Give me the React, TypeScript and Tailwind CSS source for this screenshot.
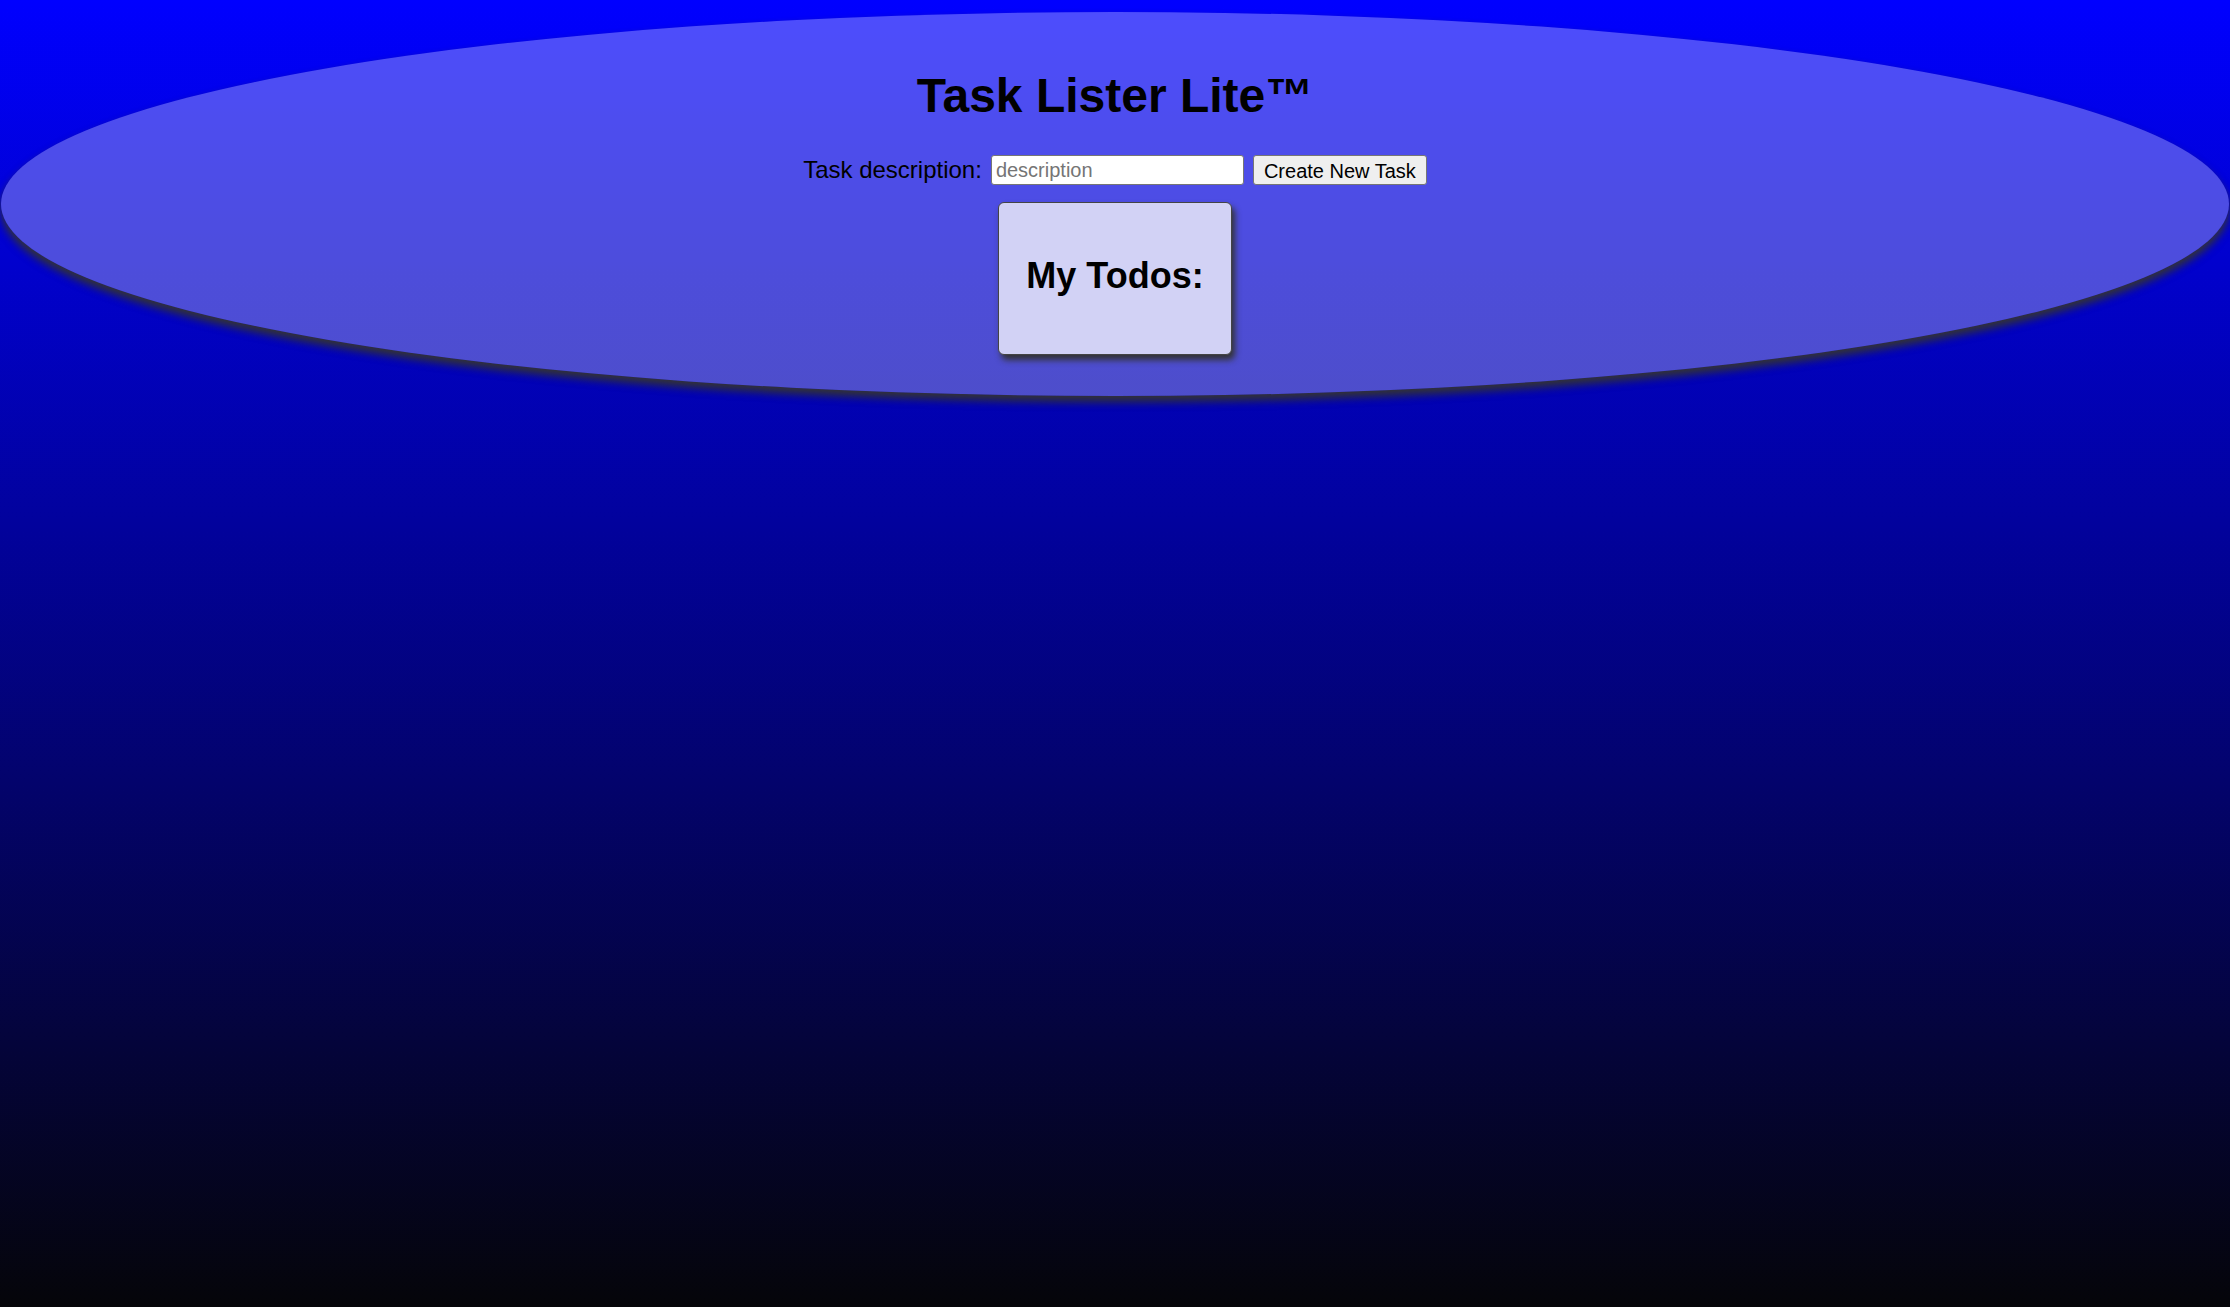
export default function App() {
  return (
    <div className="min-h-screen bg-[linear-gradient(#0000ff,#050509)] px-px pt-[12px] font-['Liberation_Sans',Arial,sans-serif] text-black">
      <header className="flex h-[384px] flex-col items-center rounded-[50%] bg-[rgba(255,255,255,0.3)] pt-[24px] shadow-[0_6px_9px_#333]">
        <h1 className="my-[32px] text-[48px] leading-[1.15] font-bold">Task Lister Lite™</h1>
        <form className="flex items-center gap-[9px]" onSubmit={(e) => e.preventDefault()}>
          <label htmlFor="new-task" className="text-[24px] leading-[1.15]">
            Task description:
          </label>
          <input
            id="new-task"
            type="text"
            placeholder="description"
            className="h-[30px] w-[253px] rounded-[3px] border border-[#767676] bg-white px-[4px] text-[20px] placeholder:text-[#757575]"
          />
          <button
            type="submit"
            className="h-[30px] w-[174px] rounded-[3px] border border-[#767676] bg-[#efefef] text-[20px]"
          >
            Create New Task
          </button>
        </form>
        <div className="mt-[17px] w-[234px] rounded-[6px] border border-[#444] bg-[#d2d2f5] pt-[52px] pb-[57px] text-center shadow-[3px_5px_6px_#333]">
          <h2 className="text-[36px] leading-[1.15] font-bold">My Todos:</h2>
        </div>
      </header>
    </div>
  );
}
